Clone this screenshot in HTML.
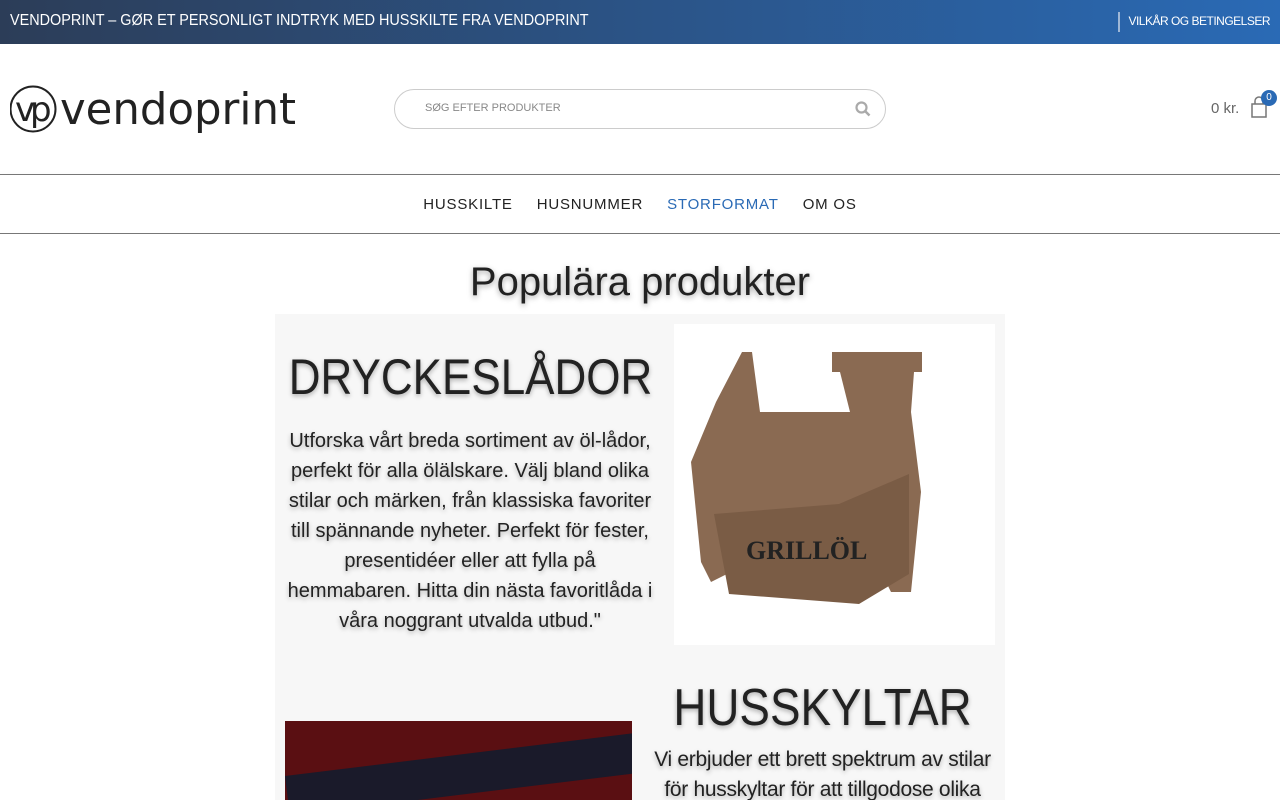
<!DOCTYPE html>
<html><head><meta charset="utf-8"><style>
*{margin:0;padding:0;box-sizing:border-box}
body{width:1280px;height:800px;overflow:hidden;background:#fff;font-family:"Liberation Sans",sans-serif;position:relative}
.top{height:44px;background:linear-gradient(90deg,#2c3d58,#2a6ab5);color:#fff;position:relative}
.top .l{position:absolute;left:10px;top:12px;font-size:15.5px;transform:scaleX(0.93);transform-origin:0 0;white-space:nowrap}
.top .r{position:absolute;right:10px;top:14px;font-size:12px;letter-spacing:-0.5px;white-space:nowrap}
.top .bar{position:absolute;left:1118px;top:12px;width:2px;height:20px;background:#9fb7d6}
.logo{position:absolute;left:10px;top:84px}
.search{position:absolute;left:394px;top:89px;width:492px;height:40px;border:1px solid #ccc;border-radius:20px;font-size:11px;color:#888;padding:12px 30px}
.nav{position:absolute;top:174px;left:0;width:1280px;height:60px;border-top:1px solid #777;border-bottom:1px solid #777;text-align:center;font-size:15px;letter-spacing:0.8px;color:#222;padding-top:21px;box-shadow:0 8px 12px rgba(0,0,0,.15)}
.nav span{margin:0 12px}
.main{position:absolute;left:0;top:234px;width:1280px;height:566px;background:#fff}
h1{position:absolute;top:26px;width:1280px;text-align:center;font-weight:400;font-size:40px;color:#222;text-shadow:0 2px 6px rgba(0,0,0,.35)}
.box{position:absolute;left:275px;top:80px;width:730px;height:486px;background:#f7f7f7;overflow:hidden}
.t{text-shadow:0 2px 5px rgba(0,0,0,.3);color:#222;text-align:center;position:absolute}
.sq{display:inline-block;transform:scaleX(0.88);white-space:nowrap}
</style></head><body>
<div class="top"><div class="l">VENDOPRINT – GØR ET PERSONLIGT INDTRYK MED HUSSKILTE FRA VENDOPRINT</div><div class="bar"></div><div class="r">VILKÅR OG BETINGELSER</div></div>
<div class="logo"><svg width="290" height="50"><circle cx="23" cy="25" r="22.5" fill="none" stroke="#222" stroke-width="2"/><text x="5" y="37" font-size="34" font-family="DejaVu Sans" fill="#222">v</text><text x="20" y="37" font-size="34" font-family="DejaVu Sans" fill="#222">p</text><text x="50" y="40" font-size="44" font-family="DejaVu Sans" fill="#222" textLength="236" lengthAdjust="spacingAndGlyphs">vendoprint</text></svg></div>
<div class="search">SØG EFTER PRODUKTER<svg style="position:absolute;right:14px;top:11px" width="16" height="16"><circle cx="6.5" cy="6.5" r="5" fill="none" stroke="#aaa" stroke-width="2.2"/><path d="M10 10l4.5 4.5" stroke="#aaa" stroke-width="2.5"/></svg></div>
<div style="position:absolute;left:1211px;top:100px;font-size:15px;color:#666">0 kr.</div>
<svg style="position:absolute;left:1250px;top:96px" width="20" height="24"><path d="M2 8h14v13H2z M5 8V5a4 4 0 0 1 8 0v3" fill="none" stroke="#777" stroke-width="1.5"/></svg>
<div style="position:absolute;left:1261px;top:90px;width:16px;height:16px;border-radius:50%;background:#2a6ab5;color:#fff;font-size:10px;text-align:center;line-height:16px">0</div>
<div class="nav"><span>HUSSKILTE</span><span>HUSNUMMER</span><span style="color:#2a6ab5">STORFORMAT</span><span>OM OS</span></div>
<div class="main">
<h1>Populära produkter</h1>
<div class="box">
<div class="t" style="left:-50px;top:34px;width:492px;font-size:50px"><span class="sq">DRYCKESLÅDOR</span></div>
<div class="t" style="left:5px;top:112px;width:380px;font-size:20px;line-height:30px">Utforska vårt breda sortiment av öl-lådor, perfekt för alla ölälskare. Välj bland olika stilar och märken, från klassiska favoriter till spännande nyheter. Perfekt för fester, presentidéer eller att fylla på hemmabaren. Hitta din nästa favoritlåda i våra noggrant utvalda utbud."</div>
<div style="position:absolute;left:399px;top:10px;width:321px;height:321px;background:#fff">
<svg width="321" height="321"><path d="M68 28h10l8 60 90 0 -10-40h-8v-20h90v20h-8l-3 40 0 0 10 80-10 100h-20l-10-20-150 0-20 10-10-20-10-100 25-60z" fill="#8a6a52"/><path d="M40 190l125-10 70-30 0 100-50 30-130-10z" fill="#7a5c45"/><text x="72" y="235" font-family="Liberation Serif" font-weight="bold" font-size="26" fill="#222">GRILLÖL</text></svg></div>
<div class="t" style="left:365px;top:364px;width:365px;font-size:52px"><span class="sq">HUSSKYLTAR</span></div>
<div class="t" style="left:365px;top:431px;width:365px;font-size:21px;line-height:30px;letter-spacing:-0.3px">Vi erbjuder ett brett spektrum av stilar för husskyltar för att tillgodose olika</div>
<div style="position:absolute;left:10px;top:407px;width:347px;height:79px;background:#5a0f12;overflow:hidden"><div style="position:absolute;left:0;top:55px;width:360px;height:40px;background:#1a1a2a;transform:rotate(-7deg);transform-origin:0 0"></div></div>
</div></div>
</body></html>
